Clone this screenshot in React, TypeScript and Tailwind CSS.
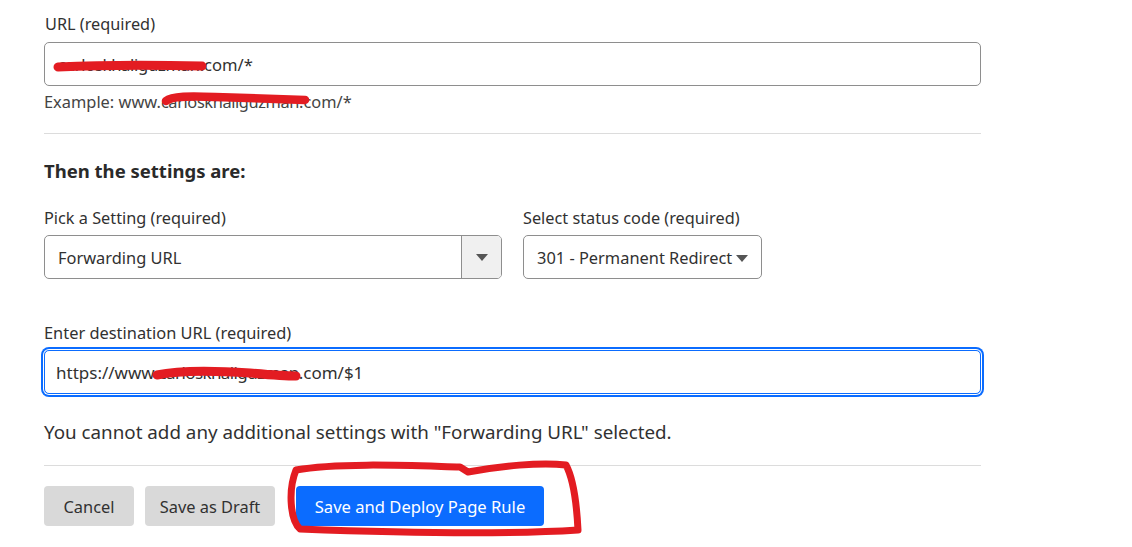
import React from "react";

const font = { fontFamily: '"Segoe UI", "Noto Sans", "Open Sans", sans-serif' };

export default function App() {
  return (
    <div className="relative w-[1132px] h-[547px] bg-white overflow-hidden text-[#313131]" style={font}>
      <div className="pl-[44px] pt-[11px] w-[981px]">
        <div className="text-[16.3px] leading-[24px] pl-[1px] pt-[1px]">URL (required)</div>
        <div className="mt-[6px] h-[44px] border border-[#8e8e8e] rounded-[5px] flex items-center pl-[13px] pt-[2px] text-[16.6px]">
          <span className="whitespace-nowrap"><span className="tracking-[-0.3px]">carloskhaliguzman</span>.com/*</span>
        </div>
        <div className="mt-[3px] text-[16.4px] leading-[24px] pt-[1px] text-[#444] whitespace-nowrap">Example: www.<span className="tracking-[-0.4px]">carloskhaliguzman</span>.com/*</div>
        <div className="mt-[19px] border-t border-[#dcdcdc]"></div>
        <div className="mt-[24px] text-[18.5px] leading-[24px] font-bold text-[#2a2a2a] pt-[1px]">Then the settings are:</div>
        <div className="mt-[22px] flex gap-[21px]">
          <div className="w-[458px]">
            <div className="text-[16.3px] leading-[24px] pt-[1px]">Pick a Setting (required)</div>
            <div className="mt-[5px] h-[44px] border border-[#8e8e8e] rounded-[5px] flex overflow-hidden">
              <div className="flex-1 flex items-center pl-[13px] pt-[2px] text-[16.4px]">Forwarding URL</div>
              <div className="w-[40px] border-l border-[#8e8e8e] bg-[#f0f0f0] flex items-center justify-center">
                <svg width="12" height="7" viewBox="0 0 12 7"><path d="M0 0h12L6 7z" fill="#555" /></svg>
              </div>
            </div>
          </div>
          <div>
            <div className="text-[16.3px] leading-[24px] pt-[1px]">Select status code (required)</div>
            <div className="mt-[5px] h-[44px] w-[239px] border border-[#8e8e8e] rounded-[5px] flex items-center pl-[13px] pt-[2px] gap-[4px] text-[16.4px] whitespace-nowrap">
              <span>301 - Permanent Redirect</span>
              <svg width="12" height="7" viewBox="0 0 12 7"><path d="M0 0h12L6 7z" fill="#555" /></svg>
            </div>
          </div>
        </div>
        <div className="mt-[41px] text-[16.4px] leading-[24px] pt-[1px]">Enter destination URL (required)</div>
        <div className="mt-[5px] h-[44px] border border-[#0b6cff] rounded-[5px] ring-2 ring-[#0b6cff] ring-offset-1 flex items-center pl-[11px] pt-[2px] text-[17px]">
          <span className="whitespace-nowrap">https://www.<span className="tracking-[-0.6px]">carloskhaliguzman</span>.com/$1</span>
        </div>
        <div className="mt-[25px] text-[18.8px] leading-[24px] pt-[1px] whitespace-nowrap">You cannot add any additional settings with "Forwarding URL" selected.</div>
        <div className="mt-[21px] border-t border-[#dcdcdc]"></div>
        <div className="mt-[20px] flex items-center">
          <button className="h-[40px] w-[90px] bg-[#d9d9d9] rounded-[4px] text-[16.4px] pt-[2px]">Cancel</button>
          <button className="ml-[11px] h-[40px] w-[130px] bg-[#d9d9d9] rounded-[4px] text-[16.4px] pt-[2px]">Save as Draft</button>
          <button className="ml-[21px] h-[40px] w-[248px] bg-[#0b6cff] rounded-[4px] text-[16.6px] pt-[2px] text-white">Save and Deploy Page Rule</button>
        </div>
      </div>
      <svg className="absolute inset-0 pointer-events-none" width="1132" height="547" viewBox="0 0 1132 547">
        <g fill="none" stroke="#e31c22" strokeLinecap="round" strokeLinejoin="round">
          <path d="M58 67 C 100 65, 160 65, 202 66" strokeWidth="9" />
          <path d="M166 101 C 172 96, 190 96, 215 97 C 250 98, 280 99, 305 100" strokeWidth="8.5" />
          <path d="M157 375 C 180 370, 220 371, 250 373 C 272 375, 288 376, 296 376" strokeWidth="9" />
          <path d="M296 470 C 340 462, 420 466, 460 467 L 468 472 C 500 466, 540 462, 566 465 C 574 480, 577 510, 578 530 C 500 535, 380 532, 300 529 C 290 520, 288 490, 296 470 Z" strokeWidth="7" />
        </g>
      </svg>
    </div>
  );
}
